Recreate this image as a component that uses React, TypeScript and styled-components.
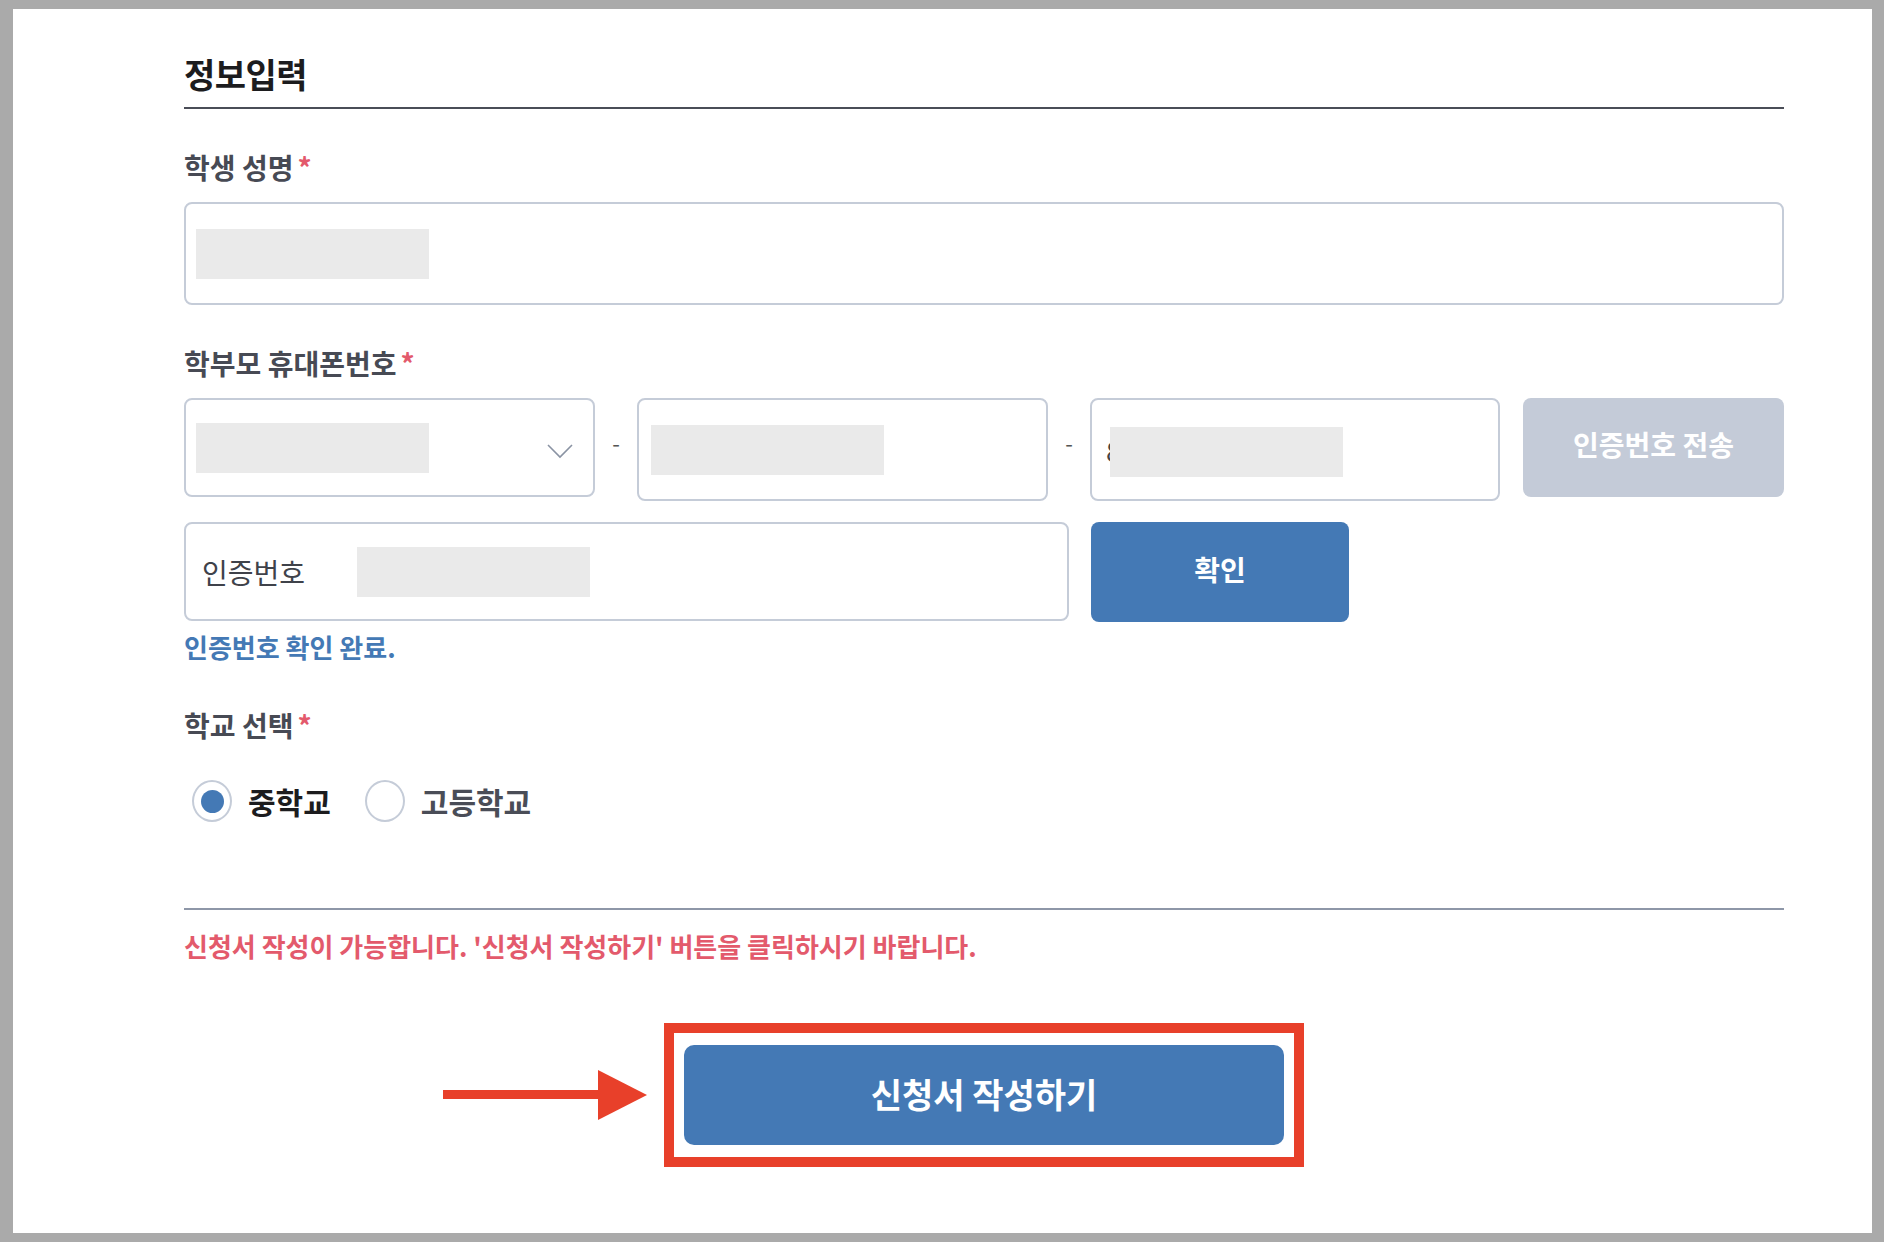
import React from "react";
import styled, { createGlobalStyle } from "styled-components";

const Color = {
  PAGE: "#aaaaaa",
  TEXT: "#1c1c1e",
  LABEL: "#474a54",
  BORDER: "#c5ccd8",
  BLUE: "#4479b5",
  DISABLED: "#c4cbd8",
  RED: "#e35a6c",
  MARK: "#e8402a",
  MASK: "#eaeaea",
};

const GlobalStyle = createGlobalStyle`
  html, body {
    margin: 0;
    padding: 0;
    background: ${Color.PAGE};
  }
  body {
    font-family: "Noto Sans CJK KR", "Noto Sans", sans-serif;
    color: ${Color.TEXT};
  }
  * { box-sizing: border-box; }
`;

const Page = styled.div`
  padding: 9px 12px 9px 13px;
`;

const Panel = styled.main`
  background: #fff;
  height: 1224px;
  padding: 43px 0 0 171px;
`;

const Content = styled.div`
  width: 1600px;
`;

const Title = styled.h1`
  margin: 0;
  font-size: 34px;
  line-height: 44px;
  font-weight: 700;
  letter-spacing: -0.5px;
  padding-bottom: 11px;
  border-bottom: 2px solid #4a4d57;
`;

const Field = styled.section<{ $gap: number }>`
  margin-top: ${(p) => p.$gap}px;
`;

const Label = styled.div`
  font-size: 28px;
  line-height: 36px;
  font-weight: 700;
  color: ${Color.LABEL};
  margin-bottom: 17px;
`;

const Star = styled.span`
  color: ${Color.RED};
  margin-left: 4px;
  font-weight: 700;
`;

const Box = styled.div<{ $h: number }>`
  position: relative;
  display: flex;
  align-items: center;
  height: ${(p) => p.$h}px;
  border: 2px solid ${Color.BORDER};
  border-radius: 8px;
  padding-left: 10px;
  background: #fff;
`;

const Mask = styled.span<{ $left?: number }>`
  display: block;
  width: 233px;
  height: 50px;
  margin-left: ${(p) => p.$left ?? 0}px;
  background: ${Color.MASK};
`;

const MaskOver = styled(Mask)`
  position: absolute;
  left: 18px;
  top: 27px;
`;

const Digit = styled.span`
  font-size: 28px;
  color: #444;
  padding-left: 4px;
`;

const Chevron = styled.svg`
  position: absolute;
  right: 20px;
  top: 43px;
`;

const PhoneRow = styled.div`
  display: grid;
  grid-template-columns: 411px 42px 411px 42px 410px 23px 261px;
  align-items: start;
`;

const Dash = styled.span`
  text-align: center;
  font-size: 22px;
  color: #555;
  line-height: 88px;
`;

const Button = styled.button<{ $disabled?: boolean; $h: number }>`
  height: ${(p) => p.$h}px;
  border: none;
  border-radius: 8px;
  background: ${(p) => (p.$disabled ? Color.DISABLED : Color.BLUE)};
  color: #fff;
  font-family: inherit;
  font-size: 28px;
  font-weight: 700;
  padding-bottom: 8px;
`;

const AuthRow = styled.div`
  display: grid;
  grid-template-columns: 885px 22px 258px;
  margin-top: 21px;
`;

const AuthLabel = styled.span`
  font-size: 28px;
  color: #3f424a;
  padding-left: 6px;
  width: 161px;
`;

const Notice = styled.p<{ $color: string; $top: number }>`
  margin: ${(p) => p.$top}px 0 0;
  font-size: 26px;
  line-height: 30px;
  font-weight: 700;
  color: ${(p) => p.$color};
`;

const RadioGroup = styled.div`
  display: flex;
  align-items: center;
  gap: 34px;
  margin-top: 37px;
  padding-left: 8px;
  height: 42px;
`;

const RadioItem = styled.label<{ $checked?: boolean }>`
  display: flex;
  align-items: center;
  gap: 16px;
  font-size: 30px;
  font-weight: 700;
  color: ${(p) => (p.$checked ? "#1c1c1e" : "#4a4d57")};
`;

const Circle = styled.span<{ $checked?: boolean }>`
  width: 40px;
  height: 42px;
  border-radius: 50%;
  border: 2px solid ${Color.BORDER};
  display: flex;
  align-items: center;
  justify-content: center;
  &::after {
    content: "";
    display: ${(p) => (p.$checked ? "block" : "none")};
    width: 23px;
    height: 23px;
    border-radius: 50%;
    background: ${Color.BLUE};
  }
`;

const Divider = styled.hr`
  margin: 86px 0 0;
  border: none;
  border-top: 2px solid #8e97a8;
`;

const SubmitArea = styled.div`
  display: flex;
  justify-content: center;
  margin-top: 62px;
`;

const Highlight = styled.div`
  position: relative;
  border: 10px solid ${Color.MARK};
  padding: 12px 10px;
`;

const SubmitButton = styled.button`
  width: 600px;
  height: 100px;
  border: none;
  border-radius: 10px;
  background: ${Color.BLUE};
  color: #fff;
  font-family: inherit;
  font-size: 34px;
  font-weight: 700;
  padding-bottom: 4px;
`;

const Arrow = styled.svg`
  position: absolute;
  left: -231px;
  top: 37px;
`;

export default function App() {
  return (
    <>
      <GlobalStyle />
      <Page>
        <Panel>
          <Content>
            <Title>정보입력</Title>

            <Field $gap={40}>
              <Label>
                학생 성명<Star>*</Star>
              </Label>
              <Box $h={103}>
                <Mask />
              </Box>
            </Field>

            <Field $gap={40}>
              <Label>
                학부모 휴대폰번호<Star>*</Star>
              </Label>
              <PhoneRow>
                <Box $h={99}>
                  <Mask />
                  <Chevron width="26" height="16" viewBox="0 0 26 16">
                    <path d="M1 2 L13 14 L25 2" fill="none" stroke="#8a93a3" strokeWidth="1.6" />
                  </Chevron>
                </Box>
                <Dash>-</Dash>
                <Box $h={103}>
                  <Mask $left={2} />
                </Box>
                <Dash>-</Dash>
                <Box $h={103}>
                  <Digit>8</Digit>
                  <MaskOver />
                </Box>
                <span />
                <Button $disabled $h={99}>
                  인증번호 전송
                </Button>
              </PhoneRow>
              <AuthRow>
                <Box $h={99}>
                  <AuthLabel>인증번호</AuthLabel>
                  <Mask />
                </Box>
                <span />
                <Button $h={100}>확인</Button>
              </AuthRow>
              <Notice $color={Color.BLUE} $top={10}>
                인증번호 확인 완료.
              </Notice>
            </Field>

            <Field $gap={45}>
              <Label>
                학교 선택<Star>*</Star>
              </Label>
              <RadioGroup>
                <RadioItem $checked>
                  <Circle $checked />
                  중학교
                </RadioItem>
                <RadioItem>
                  <Circle />
                  고등학교
                </RadioItem>
              </RadioGroup>
            </Field>

            <Divider />
            <Notice $color={Color.RED} $top={21}>
              신청서 작성이 가능합니다. '신청서 작성하기' 버튼을 클릭하시기 바랍니다.
            </Notice>

            <SubmitArea>
              <Highlight>
                <Arrow width="204" height="50" viewBox="0 0 204 50">
                  <rect x="0" y="20" width="160" height="9" fill={Color.MARK} />
                  <polygon points="155,0 204,25 155,50" fill={Color.MARK} />
                </Arrow>
                <SubmitButton>신청서 작성하기</SubmitButton>
              </Highlight>
            </SubmitArea>
          </Content>
        </Panel>
      </Page>
    </>
  );
}
